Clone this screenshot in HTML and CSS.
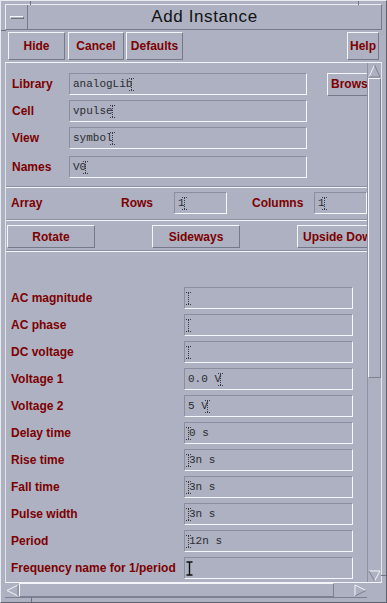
FILE: index.html
```html
<!DOCTYPE html>
<html lang="en">
<head>
    <meta charset="UTF-8">
    <meta name="viewport" content="width=device-width, initial-scale=1.0">
    <title>Add Instance</title>
    <link rel="stylesheet" href="styles.css">
</head>
<body>

    <div class="window">
        <!-- засечки рамки окна -->
        <span class="notch notch-top-l"></span>
        <span class="notch notch-top-r"></span>
        <span class="notch notch-bottom-l"></span>
        <span class="notch notch-side-l"></span>
        <span class="notch notch-side-r"></span>

        <div class="titlebar">
            <div class="menu-btn"><span class="menu-bar"></span></div>
            <div class="title">Add Instance</div>
        </div>

        <div class="actions">
            <button class="btn btn-hide">Hide</button>
            <button class="btn btn-cancel">Cancel</button>
            <button class="btn btn-defaults">Defaults</button>
            <button class="btn btn-help">Help</button>
        </div>

        <div class="scroller">
            <div class="viewport">
                <div class="section names">
                    <div class="row">
                        <label class="name-label">Library</label>
                        <div class="field name-field">analogLib<span class="caret caret-over"></span></div>
                        <button class="btn browse">Browse</button>
                    </div>
                    <div class="row">
                        <label class="name-label">Cell</label>
                        <div class="field name-field">vpulse<span class="caret caret-over"></span></div>
                    </div>
                    <div class="row">
                        <label class="name-label">View</label>
                        <div class="field name-field">symbol<span class="caret caret-over"></span></div>
                    </div>
                    <div class="row row-spaced">
                        <label class="name-label">Names</label>
                        <div class="field name-field">V0<span class="caret caret-over"></span></div>
                    </div>
                </div>

                <div class="sep"></div>

                <div class="section array">
                    <div class="row">
                        <label class="array-label">Array</label>
                        <label class="rows-label">Rows</label>
                        <div class="field small-field">1<span class="caret caret-over"></span></div>
                        <label class="cols-label">Columns</label>
                        <div class="field small-field">1<span class="caret caret-over"></span></div>
                    </div>
                </div>

                <div class="sep"></div>

                <div class="section orient">
                    <button class="btn orient-btn">Rotate</button>
                    <button class="btn orient-btn">Sideways</button>
                    <button class="btn orient-btn">Upside Down</button>
                </div>

                <div class="sep"></div>

                <div class="section params">
                    <div class="row"><label class="param-label">AC magnitude</label><div class="field param-field"><span class="caret caret-start"></span></div></div>
                    <div class="row"><label class="param-label">AC phase</label><div class="field param-field"><span class="caret caret-start"></span></div></div>
                    <div class="row"><label class="param-label">DC voltage</label><div class="field param-field"><span class="caret caret-start"></span></div></div>
                    <div class="row"><label class="param-label">Voltage 1</label><div class="field param-field">0.0 V<span class="caret caret-over"></span></div></div>
                    <div class="row"><label class="param-label">Voltage 2</label><div class="field param-field">5 V<span class="caret caret-over"></span></div></div>
                    <div class="row"><label class="param-label">Delay time</label><div class="field param-field"><span class="caret caret-start"></span>0 s</div></div>
                    <div class="row"><label class="param-label">Rise time</label><div class="field param-field"><span class="caret caret-start"></span>3n s</div></div>
                    <div class="row"><label class="param-label">Fall time</label><div class="field param-field"><span class="caret caret-start"></span>3n s</div></div>
                    <div class="row"><label class="param-label">Pulse width</label><div class="field param-field"><span class="caret caret-start"></span>3n s</div></div>
                    <div class="row"><label class="param-label">Period</label><div class="field param-field"><span class="caret caret-start"></span>12n s</div></div>
                    <div class="row">
                        <label class="param-label">Frequency name for 1/period</label>
                        <div class="field param-field">
                            <svg class="ibeam" width="7" height="15" viewBox="0 0 7 15">
                                <path d="M0.5 1H6.5M3.5 1V14M0.5 14H6.5" stroke="#111" stroke-width="1.4" fill="none"/>
                            </svg>
                        </div>
                    </div>
                </div>
            </div>

            <div class="vscroll">
                <div class="arrow arrow-up">
                    <svg width="13" height="14" viewBox="0 0 13 14">
                        <path d="M1 13L6.5 1" stroke="#f4f5f8" fill="none"/>
                        <path d="M6.5 1L12 13H1" stroke="#7d8090" fill="none"/>
                    </svg>
                </div>
                <div class="vslider"></div>
                <div class="trough"></div>
                <div class="arrow arrow-down">
                    <svg width="13" height="12" viewBox="0 0 13 12">
                        <path d="M1 1H12L6.5 11" stroke="#f4f5f8" fill="none"/>
                        <path d="M6.5 11L1 1" stroke="#7d8090" fill="none"/>
                    </svg>
                </div>
            </div>

            <div class="hscroll">
                <div class="arrow arrow-left">
                    <svg width="13" height="13" viewBox="0 0 13 13">
                        <path d="M12 12L1 6.5L12 1" stroke="#f4f5f8" fill="none"/>
                        <path d="M12 1V12" stroke="#7d8090" fill="none"/>
                    </svg>
                </div>
                <div class="hslider"></div>
                <div class="trough"></div>
                <div class="arrow arrow-right">
                    <svg width="13" height="13" viewBox="0 0 13 13">
                        <path d="M1 12V1L12 6.5" stroke="#f4f5f8" fill="none"/>
                        <path d="M12 6.5L1 12" stroke="#7d8090" fill="none"/>
                    </svg>
                </div>
            </div>

            <div class="corner"></div>
        </div>
    </div>

</body>
</html>
```

FILE: styles.css
```css
body {
    margin: 0;
    padding: 0;
    background-color: #adb1c2;
    font-family: 'Liberation Sans', Arial, sans-serif;
}

.window {
    position: relative;
    width: 387px;
    height: 603px;
    box-sizing: border-box;
    padding: 3px 4px 4px 4px;
    border: 1px solid;
    border-color: #e9eaf0 #5d606e #5d606e #e9eaf0;
    display: flex;
    flex-direction: column;
    overflow: hidden;
}

/* засечки на рамке */
.notch {
    position: absolute;
    background: #6f7281;
}

.notch-top-l { left: 29px; top: 0; width: 1px; height: 4px; }
.notch-top-r { left: 357px; top: 0; width: 1px; height: 4px; }
.notch-bottom-l { left: 30px; bottom: 0; width: 1px; height: 5px; }
.notch-side-l { left: 0; top: 29px; width: 5px; height: 1px; }
.notch-side-r { right: 0; top: 574px; width: 5px; height: 1px; }

.titlebar {
    height: 26px;
    box-sizing: border-box;
    border: 1px solid;
    border-color: #eceef3 #777a89 #777a89 #eceef3;
    display: flex;
    align-items: stretch;
}

.menu-btn {
    width: 21px;
    margin-left: 1px;
    box-sizing: border-box;
    border-right: 1px solid #777a89;
    display: flex;
    align-items: center;
    justify-content: center;
}

.menu-bar {
    width: 14px;
    height: 3px;
    box-sizing: border-box;
    border: 1px solid;
    border-color: #f4f5f8 #6f7281 #6f7281 #f4f5f8;
}

.title {
    flex: 1;
    text-align: center;
    font-size: 17px;
    line-height: 24px;
    letter-spacing: 0.6px;
    color: #111;
}

.actions {
    height: 33px;
    box-sizing: border-box;
    padding: 2px 3px 2px 3px;
    border-bottom: 1px solid #f4f5f8;
    display: flex;
}

.btn {
    box-sizing: border-box;
    height: 28px;
    padding: 0;
    border: 1px solid;
    border-color: #f4f5f8 #767988 #767988 #f4f5f8;
    background: transparent;
    font-family: 'Liberation Sans', Arial, sans-serif;
    font-weight: bold;
    font-size: 12px;
    color: #7d0000;
    white-space: nowrap;
    overflow: hidden;
}

.btn-hide { width: 57px; }
.btn-cancel { width: 56px; margin-left: 3px; }
.btn-defaults { width: 57px; margin-left: 2px; }
.btn-help { width: 32px; margin-left: auto; }

.scroller {
    flex: 1;
    display: grid;
    grid-template-columns: 1fr 15px;
    grid-template-rows: 1fr 16px;
    min-height: 0;
}

.viewport {
    border-left: 1px solid #e1e3ea;
    overflow: hidden;
    min-width: 0;
}

.section {
    box-sizing: border-box;
}

.row {
    display: flex;
    align-items: center;
    height: 22px;
    white-space: nowrap;
}

.row + .row {
    margin-top: 5px;
}

.row.row-spaced {
    margin-top: 7px;
}

label {
    font-weight: bold;
    font-size: 12px;
    color: #7d0000;
    flex-shrink: 0;
}

.field {
    box-sizing: border-box;
    height: 22px;
    flex-shrink: 0;
    padding-left: 3px;
    border: 1px solid;
    border-color: #8b8e9e #f6f7fa #f6f7fa #8b8e9e;
    font-family: 'Liberation Mono', 'Courier New', monospace;
    font-size: 11px;
    color: #2c2c30;
    display: flex;
    align-items: center;
    white-space: pre;
}

/* текстовый курсор */
.caret {
    display: inline-block;
    width: 5px;
    height: 13px;
    box-sizing: border-box;
    border-top: 1px dotted #3a3a40;
    border-bottom: 1px dotted #3a3a40;
    background: repeating-linear-gradient(#3a3a40 0 1px, transparent 1px 2px) center / 1px 100% no-repeat;
    flex-shrink: 0;
}

.caret-over {
    margin-left: -3px;
    margin-right: -2px;
}

.caret-start {
    margin-left: -2px;
    margin-right: -2px;
}

.names {
    padding: 10px 0 8px 6px;
}

.name-label { width: 57px; }
.name-field { width: 238px; }

.browse {
    width: 56px;
    height: 23px;
    margin-left: 20px;
    flex-shrink: 0;
    text-align: left;
    padding-left: 3px;
}

.sep {
    height: 2px;
    box-sizing: border-box;
    border-top: 1px solid #8e91a1;
    border-bottom: 1px solid #f4f5f8;
}

.array {
    padding: 4px 0 5px 5px;
}

.array-label { width: 110px; }
.rows-label { width: 53px; }
.small-field { width: 53px; }
.cols-label { width: 62px; margin-left: 25px; }

.orient {
    display: flex;
    gap: 57px;
    padding: 4px 0 2px 1px;
}

.orient-btn {
    width: 88px;
    height: 23px;
    flex-shrink: 0;
}

.params {
    padding: 35px 0 0 5px;
}

.param-label { width: 173px; }
.param-field { width: 169px; }

.ibeam {
    margin-left: -2px;
}

.vscroll {
    display: flex;
    flex-direction: column;
    border-left: 1px solid #8e91a1;
    border-right: 1px solid #e4e6ec;
}

.arrow {
    display: flex;
    align-items: center;
    justify-content: center;
    flex-shrink: 0;
}

.arrow-up { height: 15px; }
.arrow-down { height: 12px; }

.vslider {
    height: 300px;
    box-sizing: border-box;
    border: 1px solid;
    border-color: #f4f5f8 #7d8090 #7d8090 #f4f5f8;
}

.trough {
    flex: 1;
}

.hscroll {
    display: flex;
    border-top: 1px solid #f4f5f8;
    border-bottom: 1px solid #7d8090;
    padding-left: 1px;
}

.arrow-left { width: 13px; }
.arrow-right { width: 14px; }

.hslider {
    width: 315px;
    box-sizing: border-box;
    border: 1px solid;
    border-color: #f4f5f8 #7d8090 #7d8090 #f4f5f8;
}

.corner {
    border-top: 1px solid #f4f5f8;
}
```
